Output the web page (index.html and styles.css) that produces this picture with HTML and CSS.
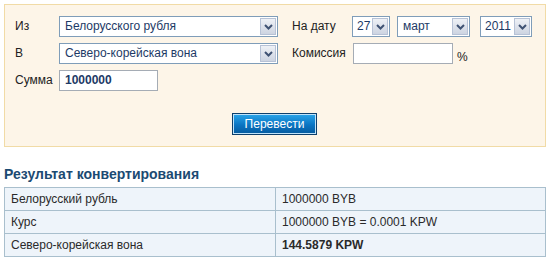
FILE: index.html
```html
<!DOCTYPE html>
<html lang="ru">
<head>
<meta charset="utf-8">
<title>Конвертер валют</title>
<link rel="stylesheet" href="styles.css">
</head>
<body>
<div class="page">
  <form class="panel">
    <div class="grid">
      <span class="label">Из</span>
      <div class="select wide"><span class="val">Белорусского рубля</span><span class="arrow"><svg width="9" height="6" viewBox="0 0 9 6"><path d="M1 1 L4.5 4.5 L8 1" fill="none" stroke="#3f5273" stroke-width="2"/></svg></span></div>
      <span class="label right">На дату</span>
      <div class="date">
        <div class="select day"><span class="val">27</span><span class="arrow"><svg width="9" height="6" viewBox="0 0 9 6"><path d="M1 1 L4.5 4.5 L8 1" fill="none" stroke="#3f5273" stroke-width="2"/></svg></span></div>
        <div class="select month"><span class="val">март</span><span class="arrow"><svg width="9" height="6" viewBox="0 0 9 6"><path d="M1 1 L4.5 4.5 L8 1" fill="none" stroke="#3f5273" stroke-width="2"/></svg></span></div>
        <div class="select year"><span class="val">2011</span><span class="arrow"><svg width="9" height="6" viewBox="0 0 9 6"><path d="M1 1 L4.5 4.5 L8 1" fill="none" stroke="#3f5273" stroke-width="2"/></svg></span></div>
      </div>

      <span class="label">В</span>
      <div class="select wide"><span class="val">Северо-корейская вона</span><span class="arrow"><svg width="9" height="6" viewBox="0 0 9 6"><path d="M1 1 L4.5 4.5 L8 1" fill="none" stroke="#3f5273" stroke-width="2"/></svg></span></div>
      <span class="label right">Комиссия</span>
      <div class="fee"><span class="input fee-input"></span><span class="pct">%</span></div>

      <span class="label">Сумма</span>
      <div><span class="input sum">1000000</span></div>
    </div>
    <div class="actions"><span class="btn">Перевести</span></div>
  </form>

  <h2 class="title">Результат конвертирования</h2>
  <table class="result">
    <tr><td class="k">Белорусский рубль</td><td>1000000 BYB</td></tr>
    <tr><td class="k">Курс</td><td>1000000 BYB = 0.0001 KPW</td></tr>
    <tr><td class="k">Северо-корейская вона</td><td class="b">144.5879 KPW</td></tr>
  </table>
</div>
</body>
</html>
```
FILE: styles.css
```css
* { box-sizing: border-box; }
body {
  margin: 0;
  background: #fff;
  font-family: "Liberation Sans", Arial, sans-serif;
  font-size: 12px;
  color: #222;
}
.page { padding: 4px 8px 0 4px; }
.panel {
  margin: 0;
  width: 542px;
  height: 143px;
  background: #fdf5e8;
  border: 1px solid #f1dba6;
  padding: 11px 10px 0 10px;
}
.grid {
  display: grid;
  grid-template-columns: 44px 219px 74px auto;
  grid-template-rows: 21px 21px 21px;
  row-gap: 6px;
  align-items: center;
}
.label { color: #222; line-height: 21px; }
.label.right { margin-left: 14px; }
.select {
  height: 21px;
  border: 1px solid #7f9db9;
  background: #fff;
  display: flex;
  align-items: stretch;
  color: #1d3a66;
}
.select .val {
  flex: 1;
  padding-left: 5px;
  line-height: 19px;
  white-space: nowrap;
  overflow: hidden;
}
.select .arrow {
  width: 16px;
  margin: 1px;
  border: 1px solid #b7c2d6;
  background: linear-gradient(#eef1f6, #cdd4e1);
  display: flex;
  align-items: center;
  justify-content: center;
}
.date { display: flex; }
.day { width: 38px; }
.day .val { padding-left: 4px; }
.month { width: 73px; margin-left: 7px; }
.year { width: 52px; margin-left: 10px; }
.year .val { padding-left: 4px; }
.fee { display: flex; align-items: flex-end; }
.input {
  display: block;
  height: 21px;
  border: 1px solid #a5acb5;
  background: #fff;
  line-height: 19px;
  padding-left: 5px;
}
.fee-input { width: 100px; margin-left: 1px; }
.pct { margin-left: 4px; line-height: 14px; color: #222; }
.sum { width: 99px; font-weight: bold; color: #1d3a66; }
.actions {
  display: flex;
  padding-left: 217px;
  margin-top: 22px;
}
.btn {
  display: block;
  width: 85px;
  height: 22px;
  border: 1px solid #0d3f6b;
  box-shadow: inset 0 0 0 1px #bfe3fa;
  background: linear-gradient(#2aa6ea, #0a74c2 55%, #065a9e);
  color: #fff;
  text-align: center;
  line-height: 20px;
  font-size: 12px;
}
.title {
  margin: 18px 0 0 0;
  font-size: 14px;
  font-weight: bold;
  color: #1b4a72;
  line-height: 18px;
}
.result {
  margin-top: 4px;
  width: 542px;
  border-collapse: collapse;
  background: #eef4fa;
}
.result td {
  border: 1px solid #a9bfcd;
  height: 23px;
  padding: 0 6px;
  color: #2a2a2a;
}
.result td.k { width: 271px; }
.result td.b { font-weight: bold; }
```
